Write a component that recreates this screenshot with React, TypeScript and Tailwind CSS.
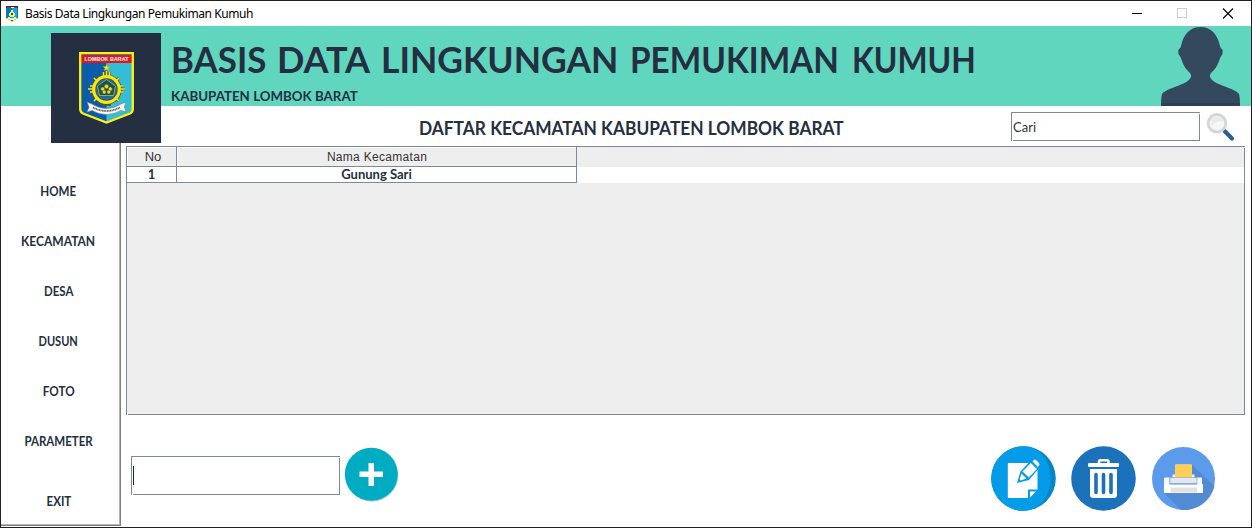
const MENU = [
  { label: "HOME", scale: "scale-x-[0.89]" },
  { label: "KECAMATAN", scale: "scale-x-[0.925]" },
  { label: "DESA", scale: "scale-x-[0.88]" },
  { label: "DUSUN", scale: "scale-x-[0.85]" },
  { label: "FOTO", scale: "scale-x-[0.9]" },
  { label: "PARAMETER", scale: "scale-x-[0.885]" },
];

const TITLE = [
  { word: "BASIS", width: "w-[106px]", scale: "scale-x-[0.97]" },
  { word: "DATA", width: "w-[104px]", scale: "scale-x-[1]" },
  { word: "LINGKUNGAN", width: "w-[249px]", scale: "scale-x-[0.985]" },
  { word: "PEMUKIMAN", width: "w-[222px]", scale: "scale-x-[0.925]" },
  { word: "KUMUH", width: "w-[125px]", scale: "scale-x-[0.885]" },
];

function Crest({ className }: { className?: string }) {
  return (
    <svg className={className} viewBox="0 0 55 72">
      <path d="M1.2 1.2H53.8V57Q53.8 60 51 61.5L27.5 70.5L4 61.5Q1.2 60 1.2 57Z" fill="#0b5cab" />
      <path d="M27.5 10H53V58L50 61L27.5 69.5Z" fill="#35bdd6" />
      <rect x="2" y="3" width="51" height="8" fill="#e3161c" />
      <text x="27.5" y="9" textAnchor="middle" fontSize="5.4" fontWeight="700" fontFamily="Liberation Sans, sans-serif" fill="#fff">LOMBOK BARAT</text>
      <path d="M27.5 12l1 2.6h2.8l-2.2 1.7.8 2.7-2.4-1.6-2.4 1.6.8-2.7-2.2-1.7h2.8Z" fill="#f5e51b" stroke="#8a8420" strokeWidth=".3" />
      <g stroke="#4c5b26" strokeWidth="2.6" fill="none">
        <path d="M24.5 20v7M27.5 19v8M30.5 20v7M24.5 48v6M27.5 48v6M30.5 48v6M11 34h8M9 37h8M11 40h8M44 34h-8M46 37h-8M44 40h-8M15 26l5 4M40 26l-5 4M15 49l5-4M40 49l-5-4" />
      </g>
      <circle cx="27.5" cy="37.5" r="12.8" fill="#216aa0" stroke="#45552b" strokeWidth="4.6" />
      <circle cx="27.5" cy="37.5" r="12.8" fill="none" stroke="#f5e51b" strokeWidth="3.2" />
      <path d="M24.5 20v6M27.5 19v6M30.5 20v6M11 34h5M9 37h5M11 40h5M44 34h-5M46 37h-5M44 40h-5M15 26l4 4M40 26l-4 4M15 49l4-4M40 49l-4-4" stroke="#f5e51b" strokeWidth="1.5" />
      <path d="M27.5 27.5l9 6.5-2 9.500H20.500l-2-9.500Z" fill="#17505f" stroke="#b9bd38" strokeWidth=".8" />
      <g fill="#e6dc2b" stroke="#3e5921" strokeWidth=".5">
        <circle cx="27.500" cy="34.500" r="2.200" />
        <circle cx="23.700" cy="37" r="2" />
        <circle cx="31.300" cy="37" r="2" />
        <circle cx="25.200" cy="40" r="1.900" />
        <circle cx="29.800" cy="40" r="1.900" />
      </g>
      <path d="M8 50l5 2q14.500 9 29 0l5-2-1.500 5 1.500 5-5-1.500q-14.500 8-29 0l-5 1.500 2-5Z" fill="#f5f5f5" stroke="#6e7880" strokeWidth=".6" />
      <path d="M14 55.500q13.500 7 27 0" fill="none" stroke="#555" strokeWidth="1.700" strokeDasharray="1.100 .5" />
      <path d="M1.200 1.200H53.800V57Q53.800 60 51 61.500L27.500 70.500L4 61.500Q1.200 60 1.200 57Z" fill="none" stroke="#fff115" strokeWidth="2.300" />
    </svg>
  );
}

function AppIcon() {
  return (
    <svg className="h-4 w-3" viewBox="0 0 12 16" shapeRendering="crispEdges">
      <path d="M0 0h12v12h-1v1h-2v1H8v1H4v-1H2v-1H0Z" fill="#0877b8" />
      <path d="M6 2h5v10H9v1H6Z" fill="#1ca7d5" />
      <path d="M0 0h12v2H0Z" fill="#272d34" />
      <path d="M1 1h10v1H1Z" fill="#c92835" />
      <path d="M5 1h3v1H5Z" fill="#eee" />
      <path d="M5 4h2v2h1v1h1v3H8v1H4v-1H3V7h1V6h1Z" fill="#f1ef75" />
      <path d="M5 7h2v2H5Z" fill="#185675" />
      <path d="M2 11h2v1h4v-1h2v2H8v1H4v-1H2Z" fill="#e8f0ed" />
      <path d="M0 12h2v1h2v1h1v1h2v-1h1v-1h2v-1h2v1h-2v1H8v1H7v1H5v-1H4v-1H2v-1H0Z" fill="#e9df20" />
    </svg>
  );
}

function Person() {
  return (
    <svg className="h-[79px] w-[79px]" viewBox="0 0 79 79">
      <path d="M39.500 0C50 0 56.500 7.500 58.700 18L59.500 20.500L61.700 23L61.500 27L59.500 30L58 34C56.500 39 53.500 43 50 46L49 48V50C51 54 55 56 59 57.500C66 60.500 76 63.500 78 67Q79 70 79 79H0Q0 70 1 67C3 63.500 13 60.500 20 57.500C24 56 28 54 30 50V48L29 46C25.500 43 22.500 39 21 34L19.500 30L17.500 27L17.300 23L19.500 20.500L20.300 18C22.500 7.500 29 0 39.500 0Z" fill="#34495e" />
      <path d="M0 76h79v1q0 2-3 2H3q-3 0-3-2Z" fill="#2e4054" />
    </svg>
  );
}

function Magnifier() {
  return (
    <svg className="h-[30px] w-[30px]" viewBox="0 0 30 30">
      <path d="M17 17l3 3" stroke="#c6c9cb" strokeWidth="3" />
      <path d="M18.800 19.300l7.200 7.200" stroke="#2c5f8d" strokeWidth="4.200" strokeLinecap="round" />
      <circle cx="11" cy="11.300" r="8.800" fill="#f7f7f7" stroke="#d3d5d6" strokeWidth="3" />
      <path d="M5 11c0-4 3-6.500 7-6 3 .5 5 2.500 5.500 5-3-1-8-1-10.500 3.500Q5.500 15 5 11Z" fill="#e9eaea" />
    </svg>
  );
}

function PlusButton() {
  return (
    <button className="h-[56px] w-[55px]">
      <svg className="h-[56px] w-[55px]" viewBox="0 0 55 56">
        <circle cx="28" cy="28.500" r="26.300" fill="#b9c6c8" opacity=".8" />
        <circle cx="27.300" cy="27.300" r="26.500" fill="#00acc1" />
        <path d="M24.500 16h5.500v8.500h9v5.500h-9v9h-5.500v-9H15.500v-5.500h9Z" fill="#fff" />
      </svg>
    </button>
  );
}

function EditIcon() {
  return (
    <svg className="h-[65px] w-[65px]" viewBox="0 0 65 65">
      <circle cx="32.500" cy="32.500" r="32.300" fill="#0485c5" />
      <path d="M38 .7C51 4 59.500 16 59.500 32.500S50 62 37 64.500A32.300 32.300 0 1 1 38 .7Z" fill="#049be8" />
      <path d="M17.500 17H46.500V43.500H37V52H17.500Q16.800 52 16.800 51V18Q16.800 17 17.500 17Z" fill="#fff" />
      <path d="M39 51.500V45.500H45Z" fill="#fff" />
      <path d="M26 37L29.500 25.500L41 13L49.500 20.500L38 34Z" fill="#049be8" />
      <path d="M31.500 25.500L39.800 17L46 23L37.800 31.500ZM41.500 15.500L43 14Q44 13 45.500 14.500L48 17Q49 18.500 48 19.500L47 21ZM30.500 27.500L35.500 32.500L29.500 34.500L28.700 33.500Z" fill="#fff" />
    </svg>
  );
}

function TrashIcon() {
  return (
    <svg className="h-[65px] w-[65px]" viewBox="0 0 65 65">
      <circle cx="32.500" cy="32.500" r="32.300" fill="#1b71ba" />
      <path d="M28 18V15.800Q28 14.300 29.500 14.300H36Q37.500 14.300 37.500 15.800V18" fill="none" stroke="#fff" strokeWidth="2.500" />
      <rect x="17" y="17" width="31" height="4" rx="1" fill="#fff" />
      <path d="M19 23H46V49Q46 52 43 52H22Q19 52 19 49Z" fill="#fff" />
      <path d="M25 28.500V46.500M32.500 28.500V46.500M40 28.500V46.500" stroke="#1b71ba" strokeWidth="3.600" strokeLinecap="round" />
    </svg>
  );
}

function PrinterIcon() {
  return (
    <svg className="h-[63px] w-[63px]" viewBox="0 0 63 63">
      <circle cx="31.500" cy="31.500" r="31.500" fill="#5c9bec" />
      <path d="M40 18L62.500 39A31.500 31.500 0 0 1 29 63L12.500 46.500Z" fill="#518bd4" />
      <path d="M20.500 31V27.500H23V18.500Q23 17.500 24 17.500H39Q40 17.500 40 18.500V27.500H42.500V31" fill="#f2f2f2" />
      <path d="M23 28V18.500Q23 17.500 24 17.500H39Q40 17.500 40 18.500V30H23Z" fill="#ffce54" />
      <path d="M12 31.500Q12 30.500 13 30.500H17.500V38H45V30.500H49Q50 30.500 50 31.500V37.500H51V46H12Z" fill="#f7f7f7" />
      <path d="M18 30.500h27v6H18Z" fill="#e5e7eb" stroke="#7ca9df" strokeWidth=".7" />
      <path d="M12 37.500h39V46H12Z" fill="#fff" />
      <path d="M18.500 40.500h26.500v5H18.500Z" fill="#e1e1e1" />
    </svg>
  );
}

/* One-pixel breaks in the top-right and bottom-left corners of a bevelled frame. */
function BevelGaps() {
  return (
    <>
      <i className="absolute top-0 -right-px h-px w-px bg-white" />
      <i className="absolute -bottom-px left-0 h-px w-px bg-white" />
    </>
  );
}

export default function App() {
  return (
    <div className="flex h-[528px] w-[1252px] flex-col overflow-hidden border border-[#202024] bg-white font-['Lato',sans-serif] text-[#242f41]">
      <div className="flex h-[25px] shrink-0 items-center pl-[5px]">
        <AppIcon />
        <span className="ml-[7px] font-['Noto_Sans',sans-serif] text-[12px] tracking-[-0.42px] whitespace-nowrap text-black">Basis Data Lingkungan Pemukiman Kumuh</span>
        <svg className="ml-auto h-[25px] w-[130px]" viewBox="0 0 130 25" shapeRendering="crispEdges">
          <path d="M11 12.500h10" stroke="#000" />
          <path d="M56.500 7.500h9v9h-9Z" fill="none" stroke="#ccc" />
          <path d="M102 7.500l10 10M112 7.500l-10 10" stroke="#000" strokeWidth="1.100" shapeRendering="auto" />
        </svg>
      </div>

      <header className="flex h-20 shrink-0 bg-[#61d6be] pl-[50px]">
        <div className="relative z-10 mt-[7px] flex h-[110px] w-[110px] shrink-0 items-center justify-center bg-[#242f41]">
          <Crest className="h-[72px] w-[55px]" />
        </div>
        <div className="flex flex-col pl-[10px]">
          <h1 className="mt-[10px] flex text-[36px] leading-[46px] font-bold whitespace-nowrap">
            {TITLE.map(({ word, width, scale }) => (
              <span key={word} className={`shrink-0 ${width}`}>
                <span className={`inline-block origin-left ${scale}`}>{word} </span>
              </span>
            ))}
          </h1>
          <p className="mt-[5px] origin-left scale-x-[0.952] text-[14px] leading-[18px] font-bold whitespace-nowrap">KABUPATEN LOMBOK BARAT</p>
        </div>
        <div className="mt-px mr-[11px] ml-auto"><Person /></div>
      </header>

      <div className="flex min-h-0 flex-1">
        <nav className="mb-px flex w-[120px] shrink-0 flex-col items-center border-r border-b border-[#7f7f7f] pt-[61px] pr-[4px] text-[13px] font-bold shadow-[inset_-1px_-1px_0_#b4b4b4]">
          {MENU.map(({ label, scale }) => (
            <button key={label} className={`flex h-[50px] shrink-0 items-center justify-center ${scale}`}>{label}</button>
          ))}
          <button className="mt-[10px] flex h-[50px] shrink-0 scale-x-[0.89] items-center justify-center">EXIT</button>
        </nav>

        <main className="flex min-w-0 flex-1 flex-col pl-[5px]">
          <div className="flex h-10 shrink-0 pl-[293px]">
            <h2 className="mt-[10px] origin-left scale-x-[0.962] text-[18px] leading-6 font-bold whitespace-nowrap">DAFTAR KECAMATAN KABUPATEN LOMBOK BARAT</h2>
            <div className="mt-[6px] mr-[15px] ml-auto flex gap-[6px]">
              <div className="relative flex h-[29px] w-[189px] items-center border border-[#7a8a99] pt-[2px] pl-px text-[13px] text-[#333]">
                Cari
                <BevelGaps />
              </div>
              <Magnifier />
            </div>
          </div>

          <div className="relative h-[269px] w-[1119px] shrink-0 border border-[#7a8a99] bg-[#eee]">
            <BevelGaps />
            <div className="flex h-5 font-['Liberation_Sans',sans-serif] text-[12px] text-[#333]">
              <div className="flex w-[50px] items-center justify-center border-r border-b border-[#7a8a99] pl-[3px] text-[13px] shadow-[inset_1px_1px_0_#fff]">No</div>
              <div className="flex w-[400px] items-center justify-center border-r border-b border-[#7a8a99] pt-px pl-px tracking-[0.3px] shadow-[inset_1px_1px_0_#fff]">Nama Kecamatan</div>
            </div>
            <div className="flex h-4 bg-white text-[13px] leading-[15px] font-bold">
              <div className="flex w-[50px] items-center justify-center border-r border-b border-[#7a8a99]">1</div>
              <div className="flex w-[400px] items-center justify-center border-r border-b border-[#7a8a99]">Gunung Sari</div>
            </div>
          </div>

          <div className="flex flex-1 pl-[5px]">
            <div className="relative mt-[41px] flex h-[39px] w-[209px] items-center border border-[#7a8a99] pl-px">
              <div className="h-[19px] w-px bg-[#222]" />
              <BevelGaps />
            </div>
            <div className="mt-[32px] ml-[4px]"><PlusButton /></div>
            <div className="mt-[31px] mr-[36px] ml-auto flex items-start gap-[15px]">
              <button><EditIcon /></button>
              <button><TrashIcon /></button>
              <button className="pt-px pl-px"><PrinterIcon /></button>
            </div>
          </div>
        </main>
      </div>
    </div>
  );
}
